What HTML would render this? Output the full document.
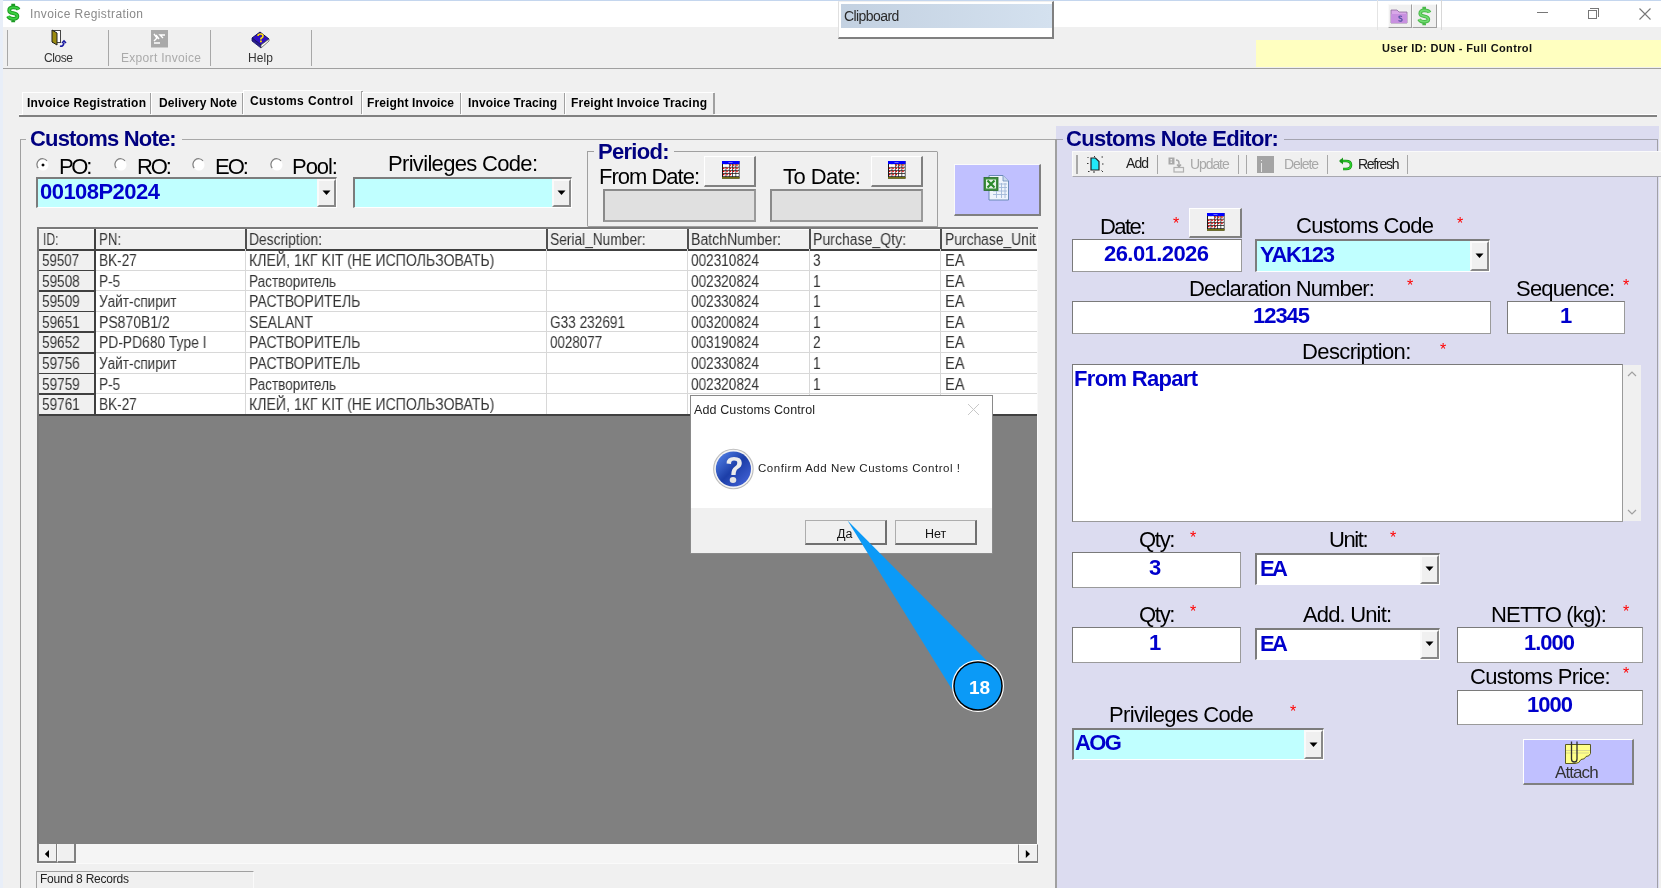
<!DOCTYPE html><html><head><meta charset="utf-8"><style>
html,body{margin:0;padding:0;}
body{width:1661px;height:888px;position:relative;overflow:hidden;font-family:"Liberation Sans",sans-serif;}
div{position:absolute;box-sizing:border-box;}
.t{white-space:nowrap;line-height:1;will-change:transform;}
</style></head><body>
<div style="left:0px;top:0px;width:1661px;height:888px;background:#f0f0f0"></div>
<div style="left:0px;top:0px;width:1661px;height:27px;background:#fff"></div>
<div style="left:0px;top:0px;width:1661px;height:1px;background:#c4d6ee"></div>
<div style="left:0px;top:0px;width:3px;height:888px;background:#e8eef8"></div>
<svg style="position:absolute;left:0;top:0" width="26" height="26" viewBox="0 0 26 26"><path d="M18.6 9.6 Q17.6 7.4 13.2 7.4 Q9.2 7.4 9.2 10.4 Q9.2 12.4 13.2 13.2 Q17.4 14 17.4 16.3 Q17.4 18.8 13.2 18.8 Q9.2 18.8 8 16.2 M13.2 3.8 V8 M13.2 18 V22.2" fill="none" stroke="#1a9a22" stroke-width="3.8"/><path d="M18.6 9.6 Q17.6 7.4 13.2 7.4 Q9.2 7.4 9.2 10.4 Q9.2 12.4 13.2 13.2 Q17.4 14 17.4 16.3 Q17.4 18.8 13.2 18.8 Q9.2 18.8 8 16.2" fill="none" stroke="#3ad040" stroke-width="1.8"/></svg>
<div class="t" style="left:30.00px;top:8.00px;font-size:12px;color:#8a8a8a;letter-spacing:0.402px;">Invoice Registration</div>
<div style="left:3px;top:27px;width:1658px;height:41px;background:#f0f0f0"></div>
<div style="left:7px;top:30px;width:1px;height:36px;background:#a8a8a8"></div>
<div style="left:108px;top:30px;width:1px;height:36px;background:#a8a8a8"></div>
<div style="left:210px;top:30px;width:1px;height:36px;background:#a8a8a8"></div>
<div style="left:311px;top:30px;width:1px;height:36px;background:#a8a8a8"></div>
<div style="left:3px;top:67.6px;width:1658px;height:1.8px;background:#a0a0a0"></div>
<svg style="position:absolute;left:50px;top:29px" width="18" height="20" viewBox="0 0 18 20"><rect x="2.5" y="1.5" width="8" height="12" fill="#fff" stroke="#444" stroke-width="1"/><path d="M2 1 L7 4 L7 16 L2 13 Z" fill="#9a8a10" stroke="#222" stroke-width="1"/><path d="M10 17 Q13 18 14 14 M12 14 L14 12 L16 14" fill="none" stroke="#1a1aa0" stroke-width="1.6"/></svg>
<svg style="position:absolute;left:151px;top:30px" width="18" height="18" viewBox="0 0 18 18"><rect x="0" y="0" width="17" height="17.5" fill="#a9a9a9"/><path d="M3 4 L6 8 L3 11 M5 5 L8 9 M14 5 L9 5 L12 8 M3 13 L9 13" fill="none" stroke="#fff" stroke-width="1.4"/></svg>
<svg style="position:absolute;left:251px;top:31px" width="19" height="18" viewBox="0 0 19 18"><path d="M1 7 L9 1 L18 8 L10 14 Z" fill="#3010c0" stroke="#101060" stroke-width="1"/><path d="M1 7 L1 10 L10 17 L10 14 Z" fill="#2a1a90" stroke="#101060" stroke-width="0.8"/><path d="M10 14 L18 8 L18 10 L10 17 Z" fill="#fff" stroke="#555" stroke-width="0.8"/><path d="M7 5 Q7 3 9.5 3 Q12 3 12 5 Q12 6.5 10.5 7 Q9.8 7.4 9.8 8.5" fill="none" stroke="#ffe000" stroke-width="1.6"/><rect x="9" y="9.5" width="1.8" height="1.8" fill="#ffe000"/></svg>
<div class="t" style="left:44.00px;top:52.00px;font-size:12px;color:#333;letter-spacing:-0.415px;">Close</div>
<div class="t" style="left:121.00px;top:52.00px;font-size:12px;color:#aaa;letter-spacing:0.306px;">Export Invoice</div>
<div class="t" style="left:248.00px;top:52.00px;font-size:12px;color:#333;letter-spacing:0.113px;">Help</div>
<div style="left:1256px;top:40px;width:405px;height:27px;background:#ffffc0"></div>
<div class="t" style="left:1382.00px;top:43.00px;font-size:11px;color:#111;font-weight:bold;letter-spacing:0.362px;">User ID: DUN - Full Control</div>
<div style="left:19px;top:115px;width:1638px;height:2px;background:#808080"></div>
<div style="left:19px;top:114px;width:1638px;height:1px;background:#fff"></div>
<div style="left:22px;top:92px;width:129px;height:23px;background:#f0f0f0;border-top:1px solid #fff;border-left:1px solid #fff;"></div>
<div style="left:150px;top:92.5px;width:1.5px;height:21px;background:#a0a0a0"></div>
<div class="t" style="left:27.00px;top:97.00px;font-size:12px;color:#000;font-weight:bold;letter-spacing:0.225px;">Invoice Registration</div>
<div style="left:151px;top:92px;width:92px;height:23px;background:#f0f0f0;border-top:1px solid #fff;border-left:1px solid #fff;"></div>
<div style="left:242px;top:92.5px;width:1.5px;height:21px;background:#a0a0a0"></div>
<div class="t" style="left:159.00px;top:97.00px;font-size:12px;color:#000;font-weight:bold;letter-spacing:0.110px;">Delivery Note</div>
<div style="left:243px;top:90px;width:119px;height:25px;background:#f0f0f0;border-top:1px solid #fff;border-left:1px solid #fff;"></div>
<div style="left:361px;top:90.5px;width:1.5px;height:23px;background:#a0a0a0"></div>
<div class="t" style="left:250.00px;top:95.00px;font-size:12px;color:#000;font-weight:bold;letter-spacing:0.406px;">Customs Control</div>
<div style="left:362px;top:92px;width:99px;height:23px;background:#f0f0f0;border-top:1px solid #fff;border-left:1px solid #fff;"></div>
<div style="left:460px;top:92.5px;width:1.5px;height:21px;background:#a0a0a0"></div>
<div class="t" style="left:367.00px;top:97.00px;font-size:12px;color:#000;font-weight:bold;letter-spacing:0.120px;">Freight Invoice</div>
<div style="left:461px;top:92px;width:104px;height:23px;background:#f0f0f0;border-top:1px solid #fff;border-left:1px solid #fff;"></div>
<div style="left:564px;top:92.5px;width:1.5px;height:21px;background:#a0a0a0"></div>
<div class="t" style="left:468.00px;top:97.00px;font-size:12px;color:#000;font-weight:bold;letter-spacing:0.117px;">Invoice Tracing</div>
<div style="left:565px;top:92px;width:149px;height:23px;background:#f0f0f0;border-top:1px solid #fff;border-left:1px solid #fff;"></div>
<div style="left:713px;top:92.5px;width:1.5px;height:21px;background:#a0a0a0"></div>
<div class="t" style="left:571.00px;top:97.00px;font-size:12px;color:#000;font-weight:bold;letter-spacing:0.212px;">Freight Invoice Tracing</div>
<div style="left:838px;top:1px;width:216px;height:38px;background:#fff;border-right:2px solid #808080;border-bottom:2.5px solid #808080;border-left:1px solid #e0e0e0;border-top:1px solid #f0f0f0;"></div>
<div style="left:841px;top:4px;width:211px;height:24px;background:linear-gradient(90deg,#c3d1e1,#d4e1ef)"></div>
<div class="t" style="left:844.00px;top:9.00px;font-size:14px;color:#2a2a2a;letter-spacing:-0.578px;">Clipboard</div>
<div style="left:1377px;top:0px;width:1px;height:30px;background:#e4e4e4"></div>
<div style="left:1441px;top:0px;width:1px;height:30px;background:#d8d8d8"></div>
<div style="left:1387.5px;top:4px;width:24px;height:24px;background:#f0f0f0;border-right:1.5px solid #a0a0a0;border-bottom:1.5px solid #a0a0a0;border-left:1px solid #fafafa;border-top:1px solid #fafafa;"></div>
<div style="left:1411.5px;top:4px;width:25px;height:24px;background:#f0f0f0;border-right:1.5px solid #a0a0a0;border-bottom:1.5px solid #a0a0a0;border-left:1px solid #fafafa;border-top:1px solid #fafafa;"></div>
<svg style="position:absolute;left:1390px;top:7px" width="20" height="18" viewBox="0 0 20 18"><path d="M1 3 L7 3 L9 5 L17 5 L17 16 L1 16 Z" fill="#d9a8e8" stroke="#8a6a9a" stroke-width="0.8"/><rect x="1" y="7" width="16" height="9" fill="#c890e0"/><path d="M12 9.5 Q10 8.5 9 9.5 Q8.5 11 11 11.5 Q13 12.5 11.5 14 Q10 14.5 8.5 13.5" fill="none" stroke="#5050a0" stroke-width="1.1"/></svg>
<svg style="position:absolute;left:1411px;top:3px" width="26" height="26" viewBox="0 0 26 26"><path d="M18.6 9.6 Q17.6 7.4 13.2 7.4 Q9.2 7.4 9.2 10.4 Q9.2 12.4 13.2 13.2 Q17.4 14 17.4 16.3 Q17.4 18.8 13.2 18.8 Q9.2 18.8 8 16.2 M13.2 3.8 V8 M13.2 18 V22.2" fill="none" stroke="#48b848" stroke-width="3.6"/><path d="M18.6 9.6 Q17.6 7.4 13.2 7.4 Q9.2 7.4 9.2 10.4 Q9.2 12.4 13.2 13.2 Q17.4 14 17.4 16.3 Q17.4 18.8 13.2 18.8 Q9.2 18.8 8 16.2" fill="none" stroke="#70dc70" stroke-width="1.6"/></svg>
<div style="left:1537px;top:12px;width:11px;height:1px;background:#777"></div>
<div style="left:1588px;top:10px;width:8.5px;height:8.5px;border:1px solid #777;background:#fff"></div>
<div style="left:1590px;top:8px;width:8.5px;height:8.5px;border-top:1px solid #777;border-right:1px solid #777;"></div>
<svg style="position:absolute;left:1639px;top:7.5px" width="12" height="12" viewBox="0 0 12 12"><path d="M0.5 0.5 L11.5 11.5 M11.5 0.5 L0.5 11.5" stroke="#777" stroke-width="1.1"/></svg>
<div style="left:20px;top:138.5px;width:1036px;height:760px;border-left:1.2px solid #a0a0a0;border-top:1px solid #a8a8a8;"></div>
<div style="left:26px;top:128px;width:156px;height:20px;background:#f0f0f0"></div>
<div class="t" style="left:30.00px;top:128.00px;font-size:22px;color:#000080;font-weight:bold;letter-spacing:-0.818px;">Customs Note:</div>
<svg style="position:absolute;left:36px;top:158px" width="14" height="14" viewBox="0 0 14 14"><circle cx="7" cy="7" r="5.5" fill="#fff"/><path d="M2.2 10 A5.5 5.5 0 0 1 11 2.8" fill="none" stroke="#808080" stroke-width="1.2"/><path d="M7 5.2 L8.8 7 L7 8.8 L5.2 7 Z" fill="#000"/></svg>
<div class="t" style="left:59.00px;top:156.00px;font-size:22px;color:#000;letter-spacing:-2.325px;">PO:</div>
<svg style="position:absolute;left:114px;top:158px" width="14" height="14" viewBox="0 0 14 14"><circle cx="7" cy="7" r="5.5" fill="#fff"/><path d="M2.2 10 A5.5 5.5 0 0 1 11 2.8" fill="none" stroke="#808080" stroke-width="1.2"/></svg>
<div class="t" style="left:137.00px;top:156.00px;font-size:22px;color:#000;letter-spacing:-2.080px;">RO:</div>
<svg style="position:absolute;left:192px;top:158px" width="14" height="14" viewBox="0 0 14 14"><circle cx="7" cy="7" r="5.5" fill="#fff"/><path d="M2.2 10 A5.5 5.5 0 0 1 11 2.8" fill="none" stroke="#808080" stroke-width="1.2"/></svg>
<div class="t" style="left:215.00px;top:156.00px;font-size:22px;color:#000;letter-spacing:-1.975px;">EO:</div>
<svg style="position:absolute;left:270px;top:158px" width="14" height="14" viewBox="0 0 14 14"><circle cx="7" cy="7" r="5.5" fill="#fff"/><path d="M2.2 10 A5.5 5.5 0 0 1 11 2.8" fill="none" stroke="#808080" stroke-width="1.2"/></svg>
<div class="t" style="left:292.00px;top:156.00px;font-size:22px;color:#000;letter-spacing:-1.040px;">Pool:</div>
<div style="left:36px;top:177px;width:301px;height:31px;background:#c0ffff;border-top:2px solid #7c7c7c;border-left:2px solid #7c7c7c;border-right:1px solid #fff;border-bottom:1px solid #fff;"></div>
<div style="left:317px;top:179px;width:19px;height:28px;background:#f0f0f0;border-left:2px solid #fafafa;border-top:2px solid #fafafa;border-right:2px solid #888;border-bottom:2px solid #888;"></div>
<svg style="position:absolute;left:321.5px;top:190.0px" width="9" height="6" viewBox="0 0 9 6"><path d="M0.5 0.5 L8.5 0.5 L4.5 5 Z" fill="#000"/></svg>
<div class="t" style="left:39.50px;top:181.00px;font-size:22px;color:#0000cc;font-weight:bold;letter-spacing:-0.539px;">00108P2024</div>
<div class="t" style="left:388.00px;top:153.00px;font-size:22px;color:#000;letter-spacing:-0.677px;">Privileges Code:</div>
<div style="left:353px;top:177px;width:219px;height:31px;background:#c0ffff;border-top:2px solid #7c7c7c;border-left:2px solid #7c7c7c;border-right:1px solid #fff;border-bottom:1px solid #fff;"></div>
<div style="left:552px;top:179px;width:19px;height:28px;background:#f0f0f0;border-left:2px solid #fafafa;border-top:2px solid #fafafa;border-right:2px solid #888;border-bottom:2px solid #888;"></div>
<svg style="position:absolute;left:556.5px;top:190.0px" width="9" height="6" viewBox="0 0 9 6"><path d="M0.5 0.5 L8.5 0.5 L4.5 5 Z" fill="#000"/></svg>
<div style="left:587px;top:151px;width:351px;height:76px;border-left:1px solid #a0a0a0;border-top:1px solid #a0a0a0;border-right:1px solid #fff;border-bottom:1px solid #fff;"></div>
<div style="left:588px;top:152px;width:350px;height:75px;border-right:1px solid #a0a0a0;border-bottom:1px solid #a0a0a0;"></div>
<div style="left:594px;top:140px;width:80px;height:16px;background:#f0f0f0"></div>
<div class="t" style="left:597.50px;top:141.00px;font-size:22px;color:#000080;font-weight:bold;letter-spacing:-0.715px;">Period:</div>
<div class="t" style="left:599.30px;top:166.00px;font-size:22px;color:#000;letter-spacing:-1.000px;">From Date:</div>
<div class="t" style="left:783.00px;top:166.00px;font-size:22px;color:#000;letter-spacing:-0.564px;">To Date:</div>
<div style="left:704px;top:156px;width:52px;height:31px;background:#f0f0f0;border-left:1px solid #fff;border-top:1px solid #fff;border-right:2px solid #808080;border-bottom:2px solid #808080;"></div>
<svg style="position:absolute;left:721.5px;top:160.8px" width="18" height="18" viewBox="0 0 18 18"><rect x="0" y="0" width="17.5" height="17.6" fill="#1a1a1a"/><rect x="0" y="0" width="17.5" height="3" fill="#0000ff"/><rect x="6.5" y="1.2" width="4" height="0.8" fill="#8080ff"/><rect x="0" y="16" width="17.5" height="1.6" fill="#707010"/><rect x="1.00" y="3.40" width="2.6" height="2.4" fill="#fff"/><rect x="4.30" y="3.40" width="2.6" height="2.4" fill="#fff"/><rect x="7.60" y="3.40" width="2.6" height="2.4" fill="#fff"/><rect x="7.60" y="3.40" width="1.5" height="1.4" fill="#e00000"/><rect x="10.90" y="3.40" width="2.6" height="2.4" fill="#fff"/><rect x="10.90" y="3.40" width="1.5" height="1.4" fill="#e00000"/><rect x="14.20" y="3.40" width="2.6" height="2.4" fill="#fff"/><rect x="14.20" y="3.40" width="1.5" height="1.4" fill="#e00000"/><rect x="1.00" y="6.55" width="2.6" height="2.4" fill="#fff"/><rect x="1.00" y="6.55" width="1.5" height="1.4" fill="#e00000"/><rect x="4.30" y="6.55" width="2.6" height="2.4" fill="#fff"/><rect x="4.30" y="6.55" width="1.5" height="1.4" fill="#e00000"/><rect x="7.60" y="6.55" width="2.6" height="2.4" fill="#fff"/><rect x="7.60" y="6.55" width="1.5" height="1.4" fill="#e00000"/><rect x="10.90" y="6.55" width="2.6" height="2.4" fill="#fff"/><rect x="10.90" y="6.55" width="1.5" height="1.4" fill="#e00000"/><rect x="14.20" y="6.55" width="2.6" height="2.4" fill="#fff"/><rect x="14.20" y="6.55" width="1.5" height="1.4" fill="#e00000"/><rect x="1.00" y="9.70" width="2.6" height="2.4" fill="#fff"/><rect x="1.00" y="9.70" width="1.5" height="1.4" fill="#e00000"/><rect x="4.30" y="9.70" width="2.6" height="2.4" fill="#fff"/><rect x="4.30" y="9.70" width="1.5" height="1.4" fill="#e00000"/><rect x="7.60" y="9.70" width="2.6" height="2.4" fill="#fff"/><rect x="7.60" y="9.70" width="1.5" height="1.4" fill="#e00000"/><rect x="10.90" y="9.70" width="2.6" height="2.4" fill="#fff"/><rect x="10.90" y="9.70" width="1.5" height="1.4" fill="#e00000"/><rect x="14.20" y="9.70" width="2.6" height="2.4" fill="#fff"/><rect x="14.20" y="9.70" width="1.5" height="1.4" fill="#e00000"/><rect x="1.00" y="12.85" width="2.6" height="2.4" fill="#fff"/><rect x="1.00" y="12.85" width="1.5" height="1.4" fill="#e00000"/><rect x="4.30" y="12.85" width="2.6" height="2.4" fill="#fff"/><rect x="4.30" y="12.85" width="1.5" height="1.4" fill="#e00000"/><rect x="7.60" y="12.85" width="2.6" height="2.4" fill="#fff"/><rect x="7.60" y="12.85" width="1.5" height="1.4" fill="#e00000"/><rect x="10.90" y="12.85" width="2.6" height="2.4" fill="#fff"/><rect x="14.20" y="12.85" width="2.6" height="2.4" fill="#fff"/><rect x="1" y="3.4" width="5.9" height="2.4" fill="#fff"/></svg>
<div style="left:871px;top:156px;width:52px;height:31px;background:#f0f0f0;border-left:1px solid #fff;border-top:1px solid #fff;border-right:2px solid #808080;border-bottom:2px solid #808080;"></div>
<svg style="position:absolute;left:887.7px;top:160.8px" width="18" height="18" viewBox="0 0 18 18"><rect x="0" y="0" width="17.5" height="17.6" fill="#1a1a1a"/><rect x="0" y="0" width="17.5" height="3" fill="#0000ff"/><rect x="6.5" y="1.2" width="4" height="0.8" fill="#8080ff"/><rect x="0" y="16" width="17.5" height="1.6" fill="#707010"/><rect x="1.00" y="3.40" width="2.6" height="2.4" fill="#fff"/><rect x="4.30" y="3.40" width="2.6" height="2.4" fill="#fff"/><rect x="7.60" y="3.40" width="2.6" height="2.4" fill="#fff"/><rect x="7.60" y="3.40" width="1.5" height="1.4" fill="#e00000"/><rect x="10.90" y="3.40" width="2.6" height="2.4" fill="#fff"/><rect x="10.90" y="3.40" width="1.5" height="1.4" fill="#e00000"/><rect x="14.20" y="3.40" width="2.6" height="2.4" fill="#fff"/><rect x="14.20" y="3.40" width="1.5" height="1.4" fill="#e00000"/><rect x="1.00" y="6.55" width="2.6" height="2.4" fill="#fff"/><rect x="1.00" y="6.55" width="1.5" height="1.4" fill="#e00000"/><rect x="4.30" y="6.55" width="2.6" height="2.4" fill="#fff"/><rect x="4.30" y="6.55" width="1.5" height="1.4" fill="#e00000"/><rect x="7.60" y="6.55" width="2.6" height="2.4" fill="#fff"/><rect x="7.60" y="6.55" width="1.5" height="1.4" fill="#e00000"/><rect x="10.90" y="6.55" width="2.6" height="2.4" fill="#fff"/><rect x="10.90" y="6.55" width="1.5" height="1.4" fill="#e00000"/><rect x="14.20" y="6.55" width="2.6" height="2.4" fill="#fff"/><rect x="14.20" y="6.55" width="1.5" height="1.4" fill="#e00000"/><rect x="1.00" y="9.70" width="2.6" height="2.4" fill="#fff"/><rect x="1.00" y="9.70" width="1.5" height="1.4" fill="#e00000"/><rect x="4.30" y="9.70" width="2.6" height="2.4" fill="#fff"/><rect x="4.30" y="9.70" width="1.5" height="1.4" fill="#e00000"/><rect x="7.60" y="9.70" width="2.6" height="2.4" fill="#fff"/><rect x="7.60" y="9.70" width="1.5" height="1.4" fill="#e00000"/><rect x="10.90" y="9.70" width="2.6" height="2.4" fill="#fff"/><rect x="10.90" y="9.70" width="1.5" height="1.4" fill="#e00000"/><rect x="14.20" y="9.70" width="2.6" height="2.4" fill="#fff"/><rect x="14.20" y="9.70" width="1.5" height="1.4" fill="#e00000"/><rect x="1.00" y="12.85" width="2.6" height="2.4" fill="#fff"/><rect x="1.00" y="12.85" width="1.5" height="1.4" fill="#e00000"/><rect x="4.30" y="12.85" width="2.6" height="2.4" fill="#fff"/><rect x="4.30" y="12.85" width="1.5" height="1.4" fill="#e00000"/><rect x="7.60" y="12.85" width="2.6" height="2.4" fill="#fff"/><rect x="7.60" y="12.85" width="1.5" height="1.4" fill="#e00000"/><rect x="10.90" y="12.85" width="2.6" height="2.4" fill="#fff"/><rect x="14.20" y="12.85" width="2.6" height="2.4" fill="#fff"/><rect x="1" y="3.4" width="5.9" height="2.4" fill="#fff"/></svg>
<div style="left:603px;top:189px;width:153px;height:33px;background:#e0e0e0;border:2px solid #8a8a8a;border-right-color:#9a9a9a;border-bottom-color:#9a9a9a;"></div>
<div style="left:770px;top:189px;width:153px;height:33px;background:#e0e0e0;border:2px solid #8a8a8a;border-right-color:#9a9a9a;border-bottom-color:#9a9a9a;"></div>
<div style="left:954px;top:164px;width:86.5px;height:52px;background:#c0c0ff;border-left:1.5px solid #fafafa;border-top:1.5px solid #fafafa;border-right:2px solid #808080;border-bottom:2px solid #808080;"></div>
<svg style="position:absolute;left:983px;top:174px" width="27" height="28" viewBox="0 0 27 28"><path d="M6 1.5 L20 1.5 L25.5 7 L25.5 26 L6 26 Z" fill="#eef4fc" stroke="#6a8ab8" stroke-width="1"/><path d="M20 1.5 L20 7 L25.5 7" fill="#c8d8ec" stroke="#6a8ab8" stroke-width="0.8"/><path d="M16 10 H24 M16 13.5 H24 M10 17 H24 M10 20.5 H24 M13.5 15 V24 M18.5 9 V24 M22 9 V24" stroke="#a0b8d8" stroke-width="0.9"/><rect x="1" y="3.5" width="14" height="13" fill="#3e8e3e" stroke="#2a6a2a" stroke-width="0.8"/><rect x="3" y="5.5" width="10" height="9" fill="#e8f4e8"/><path d="M4.5 6.5 L11.5 13.5 M11.5 6.5 L4.5 13.5" stroke="#2a8a2a" stroke-width="2.2"/></svg>
<div style="left:37px;top:227px;width:1001px;height:617px;background:#808080"></div>
<div style="left:37px;top:227px;width:1001px;height:2px;background:#7a7a7a"></div>
<div style="left:37px;top:227px;width:2px;height:616px;background:#7a7a7a"></div>
<div style="left:39px;top:229px;width:999px;height:20px;background:#f0f0f0;border-top:1px solid #fff;"></div>
<div style="left:39px;top:249px;width:56px;height:165px;background:#f0f0f0"></div>
<div style="left:95px;top:250px;width:943px;height:164px;background:#fff"></div>
<div style="left:39px;top:249px;width:999px;height:1.5px;background:#404040"></div>
<div style="left:39px;top:269.6px;width:55px;height:1.5px;background:#404040"></div>
<div style="left:95px;top:269.6px;width:943px;height:1px;background:#d8d8d8"></div>
<div style="left:39px;top:290.2px;width:55px;height:1.5px;background:#404040"></div>
<div style="left:95px;top:290.2px;width:943px;height:1px;background:#d8d8d8"></div>
<div style="left:39px;top:310.8px;width:55px;height:1.5px;background:#404040"></div>
<div style="left:95px;top:310.8px;width:943px;height:1px;background:#d8d8d8"></div>
<div style="left:39px;top:331.4px;width:55px;height:1.5px;background:#404040"></div>
<div style="left:95px;top:331.4px;width:943px;height:1px;background:#d8d8d8"></div>
<div style="left:39px;top:352.0px;width:55px;height:1.5px;background:#404040"></div>
<div style="left:95px;top:352.0px;width:943px;height:1px;background:#d8d8d8"></div>
<div style="left:39px;top:372.6px;width:55px;height:1.5px;background:#404040"></div>
<div style="left:95px;top:372.6px;width:943px;height:1px;background:#d8d8d8"></div>
<div style="left:39px;top:393.2px;width:55px;height:1.5px;background:#404040"></div>
<div style="left:95px;top:393.2px;width:943px;height:1px;background:#d8d8d8"></div>
<div style="left:39px;top:413.8px;width:55px;height:1.5px;background:#404040"></div>
<div style="left:95px;top:413.8px;width:943px;height:1px;background:#d8d8d8"></div>
<div style="left:94px;top:229px;width:1.5px;height:186px;background:#404040"></div>
<div style="left:245px;top:229px;width:1.5px;height:20px;background:#505050"></div>
<div style="left:245px;top:249px;width:1px;height:165px;background:#d8d8d8"></div>
<div style="left:546px;top:229px;width:1.5px;height:20px;background:#505050"></div>
<div style="left:546px;top:249px;width:1px;height:165px;background:#d8d8d8"></div>
<div style="left:687px;top:229px;width:1.5px;height:20px;background:#505050"></div>
<div style="left:687px;top:249px;width:1px;height:165px;background:#d8d8d8"></div>
<div style="left:809px;top:229px;width:1.5px;height:20px;background:#505050"></div>
<div style="left:809px;top:249px;width:1px;height:165px;background:#d8d8d8"></div>
<div style="left:940px;top:229px;width:1.5px;height:20px;background:#505050"></div>
<div style="left:940px;top:249px;width:1px;height:165px;background:#d8d8d8"></div>
<div style="left:1037px;top:229px;width:1.2px;height:615px;background:#f8f8f8"></div>
<div style="left:39px;top:414px;width:998px;height:1.5px;background:#404040"></div>
<div class="t" style="left:42.80px;top:232.00px;font-size:16px;color:#333;transform:scaleX(0.7568);transform-origin:0 0;">ID:</div>
<div class="t" style="left:99.00px;top:232.00px;font-size:16px;color:#333;transform:scaleX(0.8258);transform-origin:0 0;">PN:</div>
<div class="t" style="left:249.00px;top:232.00px;font-size:16px;color:#333;transform:scaleX(0.8641);transform-origin:0 0;">Description:</div>
<div class="t" style="left:549.50px;top:232.00px;font-size:16px;color:#333;transform:scaleX(0.8588);transform-origin:0 0;">Serial_Number:</div>
<div class="t" style="left:690.80px;top:232.00px;font-size:16px;color:#333;transform:scaleX(0.8803);transform-origin:0 0;">BatchNumber:</div>
<div class="t" style="left:813.40px;top:232.00px;font-size:16px;color:#333;transform:scaleX(0.8787);transform-origin:0 0;">Purchase_Qty:</div>
<div class="t" style="left:945.00px;top:232.00px;font-size:16px;color:#333;transform:scaleX(0.8651);transform-origin:0 0;">Purchase_Unit</div>
<div class="t" style="left:41.90px;top:253.00px;font-size:16px;color:#333;transform:scaleX(0.8341);transform-origin:0 0;">59507</div>
<div class="t" style="left:99.30px;top:253.00px;font-size:16px;color:#333;transform:scaleX(0.8484);transform-origin:0 0;">BK-27</div>
<div class="t" style="left:249.00px;top:253.00px;font-size:16px;color:#333;transform:scaleX(0.8824);transform-origin:0 0;">КЛЕЙ, 1КГ KIT (НЕ ИСПОЛЬЗОВАТЬ)</div>
<div class="t" style="left:690.80px;top:253.00px;font-size:16px;color:#333;transform:scaleX(0.8484);transform-origin:0 0;">002310824</div>
<div class="t" style="left:813.40px;top:253.00px;font-size:16px;color:#333;transform:scaleX(0.8484);transform-origin:0 0;">3</div>
<div class="t" style="left:945.00px;top:253.00px;font-size:16px;color:#333;transform:scaleX(0.9176);transform-origin:0 0;">EA</div>
<div class="t" style="left:41.90px;top:274.00px;font-size:16px;color:#333;transform:scaleX(0.8484);transform-origin:0 0;">59508</div>
<div class="t" style="left:99.30px;top:274.00px;font-size:16px;color:#333;transform:scaleX(0.8484);transform-origin:0 0;">P-5</div>
<div class="t" style="left:249.00px;top:274.00px;font-size:16px;color:#333;transform:scaleX(0.8484);transform-origin:0 0;">Растворитель</div>
<div class="t" style="left:690.80px;top:274.00px;font-size:16px;color:#333;transform:scaleX(0.8484);transform-origin:0 0;">002320824</div>
<div class="t" style="left:813.40px;top:274.00px;font-size:16px;color:#333;transform:scaleX(0.8484);transform-origin:0 0;">1</div>
<div class="t" style="left:945.00px;top:274.00px;font-size:16px;color:#333;transform:scaleX(0.9176);transform-origin:0 0;">EA</div>
<div class="t" style="left:41.90px;top:294.00px;font-size:16px;color:#333;transform:scaleX(0.8484);transform-origin:0 0;">59509</div>
<div class="t" style="left:99.30px;top:294.00px;font-size:16px;color:#333;transform:scaleX(0.8484);transform-origin:0 0;">Уайт-спирит</div>
<div class="t" style="left:249.00px;top:294.00px;font-size:16px;color:#333;transform:scaleX(0.8767);transform-origin:0 0;">РАСТВОРИТЕЛЬ</div>
<div class="t" style="left:690.80px;top:294.00px;font-size:16px;color:#333;transform:scaleX(0.8484);transform-origin:0 0;">002330824</div>
<div class="t" style="left:813.40px;top:294.00px;font-size:16px;color:#333;transform:scaleX(0.8484);transform-origin:0 0;">1</div>
<div class="t" style="left:945.00px;top:294.00px;font-size:16px;color:#333;transform:scaleX(0.9176);transform-origin:0 0;">EA</div>
<div class="t" style="left:41.90px;top:315.00px;font-size:16px;color:#333;transform:scaleX(0.8484);transform-origin:0 0;">59651</div>
<div class="t" style="left:99.30px;top:315.00px;font-size:16px;color:#333;transform:scaleX(0.8745);transform-origin:0 0;">PS870B1/2</div>
<div class="t" style="left:249.00px;top:315.00px;font-size:16px;color:#333;transform:scaleX(0.8754);transform-origin:0 0;">SEALANT</div>
<div class="t" style="left:549.50px;top:315.00px;font-size:16px;color:#333;transform:scaleX(0.8515);transform-origin:0 0;">G33 232691</div>
<div class="t" style="left:690.80px;top:315.00px;font-size:16px;color:#333;transform:scaleX(0.8484);transform-origin:0 0;">003200824</div>
<div class="t" style="left:813.40px;top:315.00px;font-size:16px;color:#333;transform:scaleX(0.8484);transform-origin:0 0;">1</div>
<div class="t" style="left:945.00px;top:315.00px;font-size:16px;color:#333;transform:scaleX(0.9176);transform-origin:0 0;">EA</div>
<div class="t" style="left:41.90px;top:335.00px;font-size:16px;color:#333;transform:scaleX(0.8484);transform-origin:0 0;">59652</div>
<div class="t" style="left:99.30px;top:335.00px;font-size:16px;color:#333;transform:scaleX(0.8653);transform-origin:0 0;">PD-PD680 Type I</div>
<div class="t" style="left:249.00px;top:335.00px;font-size:16px;color:#333;transform:scaleX(0.8767);transform-origin:0 0;">РАСТВОРИТЕЛЬ</div>
<div class="t" style="left:549.50px;top:335.00px;font-size:16px;color:#333;transform:scaleX(0.8360);transform-origin:0 0;">0028077</div>
<div class="t" style="left:690.80px;top:335.00px;font-size:16px;color:#333;transform:scaleX(0.8484);transform-origin:0 0;">003190824</div>
<div class="t" style="left:813.40px;top:335.00px;font-size:16px;color:#333;transform:scaleX(0.8484);transform-origin:0 0;">2</div>
<div class="t" style="left:945.00px;top:335.00px;font-size:16px;color:#333;transform:scaleX(0.9176);transform-origin:0 0;">EA</div>
<div class="t" style="left:41.90px;top:356.00px;font-size:16px;color:#333;transform:scaleX(0.8484);transform-origin:0 0;">59756</div>
<div class="t" style="left:99.30px;top:356.00px;font-size:16px;color:#333;transform:scaleX(0.8484);transform-origin:0 0;">Уайт-спирит</div>
<div class="t" style="left:249.00px;top:356.00px;font-size:16px;color:#333;transform:scaleX(0.8767);transform-origin:0 0;">РАСТВОРИТЕЛЬ</div>
<div class="t" style="left:690.80px;top:356.00px;font-size:16px;color:#333;transform:scaleX(0.8484);transform-origin:0 0;">002330824</div>
<div class="t" style="left:813.40px;top:356.00px;font-size:16px;color:#333;transform:scaleX(0.8484);transform-origin:0 0;">1</div>
<div class="t" style="left:945.00px;top:356.00px;font-size:16px;color:#333;transform:scaleX(0.9176);transform-origin:0 0;">EA</div>
<div class="t" style="left:41.90px;top:377.00px;font-size:16px;color:#333;transform:scaleX(0.8484);transform-origin:0 0;">59759</div>
<div class="t" style="left:99.30px;top:377.00px;font-size:16px;color:#333;transform:scaleX(0.8484);transform-origin:0 0;">P-5</div>
<div class="t" style="left:249.00px;top:377.00px;font-size:16px;color:#333;transform:scaleX(0.8484);transform-origin:0 0;">Растворитель</div>
<div class="t" style="left:690.80px;top:377.00px;font-size:16px;color:#333;transform:scaleX(0.8484);transform-origin:0 0;">002320824</div>
<div class="t" style="left:813.40px;top:377.00px;font-size:16px;color:#333;transform:scaleX(0.8484);transform-origin:0 0;">1</div>
<div class="t" style="left:945.00px;top:377.00px;font-size:16px;color:#333;transform:scaleX(0.9176);transform-origin:0 0;">EA</div>
<div class="t" style="left:41.90px;top:397.00px;font-size:16px;color:#333;transform:scaleX(0.8484);transform-origin:0 0;">59761</div>
<div class="t" style="left:99.30px;top:397.00px;font-size:16px;color:#333;transform:scaleX(0.8484);transform-origin:0 0;">BK-27</div>
<div class="t" style="left:249.00px;top:397.00px;font-size:16px;color:#333;transform:scaleX(0.8824);transform-origin:0 0;">КЛЕЙ, 1КГ KIT (НЕ ИСПОЛЬЗОВАТЬ)</div>
<div style="left:37px;top:844px;width:1001px;height:19px;background:#f5f5f5;"></div>
<div style="left:37px;top:844px;width:2px;height:19.5px;background:#7a7a7a"></div>
<div style="left:39px;top:844px;width:17.5px;height:18.5px;background:#f0f0f0;border-right:1.5px solid #808080;border-bottom:2px solid #808080;"></div>
<svg style="position:absolute;left:44px;top:849.5px" width="6" height="9" viewBox="0 0 6 9"><path d="M5 0 L5 8 L0.8 4 Z" fill="#000"/></svg>
<div style="left:56.5px;top:844px;width:19px;height:18.5px;background:#f0f0f0;border-right:2px solid #808080;border-bottom:2px solid #808080;border-left:1px solid #fafafa;"></div>
<div style="left:1018px;top:844px;width:19.5px;height:18.5px;background:#f0f0f0;border-left:1.5px solid #808080;border-right:1.5px solid #808080;border-bottom:2px solid #808080;border-top:1px solid #fff;"></div>
<svg style="position:absolute;left:1025px;top:849.5px" width="6" height="9" viewBox="0 0 6 9"><path d="M0.8 0 L0.8 8 L5 4 Z" fill="#000"/></svg>
<div style="left:36px;top:862.5px;width:1002px;height:1.5px;background:#fafafa"></div>
<div style="left:35.9px;top:870.7px;width:218px;height:18px;border-top:1px solid #a0a0a0;border-left:1px solid #a0a0a0;border-right:1px solid #fafafa;"></div>
<div class="t" style="left:39.50px;top:873.00px;font-size:12px;color:#222;letter-spacing:-0.217px;">Found 8 Records</div>
<div style="left:1055.5px;top:126px;width:603.5px;height:762px;background:#dcdcf0"></div>
<div style="left:1056.5px;top:138.5px;width:601.5px;height:750px;border-top:1px solid #a4a4b0;border-right:1.5px solid #a0a0a8;"></div>
<div style="left:1054.5px;top:138.5px;width:2px;height:750px;background:#a0a0a0"></div>
<div style="left:1062.5px;top:127px;width:221px;height:20px;background:#dcdcf0"></div>
<div class="t" style="left:1066.00px;top:128.00px;font-size:22px;color:#000080;font-weight:bold;letter-spacing:-0.693px;">Customs Note Editor:</div>
<div style="left:1071.5px;top:150.7px;width:589.5px;height:26px;background:#f0f0f0;border-top:1px solid #fafafa;border-left:1px solid #fafafa;border-bottom:1.5px solid #a8a8b0;"></div>
<div style="left:1076.4px;top:154.5px;width:1.2px;height:19.5px;background:#a8a8a8"></div>
<div style="left:1156.9px;top:154.5px;width:1.2px;height:19.5px;background:#a8a8a8"></div>
<div style="left:1237.5px;top:154.5px;width:1.2px;height:19.5px;background:#a8a8a8"></div>
<div style="left:1246.3px;top:154.5px;width:1.2px;height:19.5px;background:#a8a8a8"></div>
<div style="left:1327px;top:154.5px;width:1.2px;height:19.5px;background:#a8a8a8"></div>
<div style="left:1407.3px;top:154.5px;width:1.2px;height:19.5px;background:#a8a8a8"></div>
<svg style="position:absolute;left:1087px;top:156px" width="18" height="17" viewBox="0 0 18 17"><path d="M4 2 L8.5 2 L12 5.5 L12 14 L4 14 Z" fill="#20e8f8" stroke="#222" stroke-width="1.2"/><path d="M0.5 1.5 L1.5 1.5 M14.5 1 L16 1 M0 7.5 L1.5 7.5 M15 8 L16.5 8 M1 15.5 L2.5 15.5 M14.5 14.5 L16 16 M7.5 0 L7.5 1.2 M6 16 L8 16" stroke="#333" stroke-width="1"/></svg>
<div class="t" style="left:1126.10px;top:156.00px;font-size:14px;color:#222;letter-spacing:-0.910px;">Add</div>
<svg style="position:absolute;left:1168px;top:156.5px" width="17" height="16" viewBox="0 0 17 16"><rect x="0.5" y="0.5" width="6" height="7" fill="#a8a8a8"/><rect x="2.5" y="2" width="1.6" height="1.4" fill="#f0f0f0"/><rect x="2.5" y="4.5" width="1.6" height="1.4" fill="#f0f0f0"/><path d="M8 3 Q11 3 11 6 L11 9 M9 7.5 L11 10 L13 7.5" fill="none" stroke="#a8a8a8" stroke-width="1.4"/><rect x="6" y="10.5" width="9.5" height="4.5" fill="none" stroke="#b0b0b0" stroke-width="1.2"/></svg>
<div class="t" style="left:1190.00px;top:157.00px;font-size:14px;color:#a8a8a8;letter-spacing:-1.090px;">Update</div>
<div style="left:1256.8px;top:156px;width:17.2px;height:16.7px;background:#a4a4a4"></div>
<div style="left:1261px;top:163px;width:1.3px;height:9px;background:#e8e8e8"></div>
<div style="left:1261px;top:159.5px;width:1.3px;height:1.3px;background:#e8e8e8"></div>
<div class="t" style="left:1284.00px;top:157.00px;font-size:14px;color:#a8a8a8;letter-spacing:-1.092px;">Delete</div>
<svg style="position:absolute;left:1338px;top:157px" width="15" height="14" viewBox="0 0 15 14"><path d="M2 4 L8 4 Q13 4 13 8 Q13 12 8 12 L5 12" fill="none" stroke="#1a8a1a" stroke-width="2.6"/><path d="M2 4 L8 4 Q13 4 13 8 Q13 12 8 12 L5 12" fill="none" stroke="#30e030" stroke-width="1.2"/><path d="M1 4 L5 0.5 L5 7.5 Z" fill="#1a9a1a"/></svg>
<div class="t" style="left:1358.00px;top:157.00px;font-size:14px;color:#222;letter-spacing:-1.267px;">Refresh</div>
<div class="t" style="left:1099.90px;top:216.00px;font-size:22px;color:#000;letter-spacing:-1.595px;">Date:</div>
<div class="t" style="left:1173.43px;top:215.82px;font-size:16px;color:#f00;">*</div>
<div style="left:1189px;top:208px;width:53px;height:30px;background:#f0f0f0;border-left:1px solid #fff;border-top:1px solid #fff;border-right:2px solid #808080;border-bottom:2px solid #808080;"></div>
<svg style="position:absolute;left:1206.5px;top:212.8px" width="18" height="18" viewBox="0 0 18 18"><rect x="0" y="0" width="17.5" height="17.6" fill="#1a1a1a"/><rect x="0" y="0" width="17.5" height="3" fill="#0000ff"/><rect x="6.5" y="1.2" width="4" height="0.8" fill="#8080ff"/><rect x="0" y="16" width="17.5" height="1.6" fill="#707010"/><rect x="1.00" y="3.40" width="2.6" height="2.4" fill="#fff"/><rect x="4.30" y="3.40" width="2.6" height="2.4" fill="#fff"/><rect x="7.60" y="3.40" width="2.6" height="2.4" fill="#fff"/><rect x="7.60" y="3.40" width="1.5" height="1.4" fill="#e00000"/><rect x="10.90" y="3.40" width="2.6" height="2.4" fill="#fff"/><rect x="10.90" y="3.40" width="1.5" height="1.4" fill="#e00000"/><rect x="14.20" y="3.40" width="2.6" height="2.4" fill="#fff"/><rect x="14.20" y="3.40" width="1.5" height="1.4" fill="#e00000"/><rect x="1.00" y="6.55" width="2.6" height="2.4" fill="#fff"/><rect x="1.00" y="6.55" width="1.5" height="1.4" fill="#e00000"/><rect x="4.30" y="6.55" width="2.6" height="2.4" fill="#fff"/><rect x="4.30" y="6.55" width="1.5" height="1.4" fill="#e00000"/><rect x="7.60" y="6.55" width="2.6" height="2.4" fill="#fff"/><rect x="7.60" y="6.55" width="1.5" height="1.4" fill="#e00000"/><rect x="10.90" y="6.55" width="2.6" height="2.4" fill="#fff"/><rect x="10.90" y="6.55" width="1.5" height="1.4" fill="#e00000"/><rect x="14.20" y="6.55" width="2.6" height="2.4" fill="#fff"/><rect x="14.20" y="6.55" width="1.5" height="1.4" fill="#e00000"/><rect x="1.00" y="9.70" width="2.6" height="2.4" fill="#fff"/><rect x="1.00" y="9.70" width="1.5" height="1.4" fill="#e00000"/><rect x="4.30" y="9.70" width="2.6" height="2.4" fill="#fff"/><rect x="4.30" y="9.70" width="1.5" height="1.4" fill="#e00000"/><rect x="7.60" y="9.70" width="2.6" height="2.4" fill="#fff"/><rect x="7.60" y="9.70" width="1.5" height="1.4" fill="#e00000"/><rect x="10.90" y="9.70" width="2.6" height="2.4" fill="#fff"/><rect x="10.90" y="9.70" width="1.5" height="1.4" fill="#e00000"/><rect x="14.20" y="9.70" width="2.6" height="2.4" fill="#fff"/><rect x="14.20" y="9.70" width="1.5" height="1.4" fill="#e00000"/><rect x="1.00" y="12.85" width="2.6" height="2.4" fill="#fff"/><rect x="1.00" y="12.85" width="1.5" height="1.4" fill="#e00000"/><rect x="4.30" y="12.85" width="2.6" height="2.4" fill="#fff"/><rect x="4.30" y="12.85" width="1.5" height="1.4" fill="#e00000"/><rect x="7.60" y="12.85" width="2.6" height="2.4" fill="#fff"/><rect x="7.60" y="12.85" width="1.5" height="1.4" fill="#e00000"/><rect x="10.90" y="12.85" width="2.6" height="2.4" fill="#fff"/><rect x="14.20" y="12.85" width="2.6" height="2.4" fill="#fff"/><rect x="1" y="3.4" width="5.9" height="2.4" fill="#fff"/></svg>
<div style="left:1072px;top:239px;width:170px;height:33px;background:#fff;border:1px solid #7a7a7a;border-right-color:#9a9a9a;border-bottom-color:#9a9a9a;"></div>
<div class="t" style="left:1104.00px;top:243.00px;font-size:22px;color:#0000cc;font-weight:bold;letter-spacing:-0.568px;">26.01.2026</div>
<div class="t" style="left:1296.00px;top:215.00px;font-size:22px;color:#000;letter-spacing:-0.685px;">Customs Code</div>
<div class="t" style="left:1457.13px;top:216.42px;font-size:16px;color:#f00;">*</div>
<div style="left:1255px;top:239px;width:235px;height:33px;background:#c0ffff;border-top:2px solid #7c7c7c;border-left:2px solid #7c7c7c;border-right:1px solid #fff;border-bottom:1px solid #fff;"></div>
<div style="left:1470px;top:241px;width:19px;height:30px;background:#f0f0f0;border-left:2px solid #fafafa;border-top:2px solid #fafafa;border-right:2px solid #888;border-bottom:2px solid #888;"></div>
<svg style="position:absolute;left:1474.5px;top:253.0px" width="9" height="6" viewBox="0 0 9 6"><path d="M0.5 0.5 L8.5 0.5 L4.5 5 Z" fill="#000"/></svg>
<div class="t" style="left:1260.00px;top:244.00px;font-size:22px;color:#0000cc;font-weight:bold;letter-spacing:-1.236px;">YAK123</div>
<div class="t" style="left:1189.00px;top:278.00px;font-size:22px;color:#000;letter-spacing:-0.886px;">Declaration Number:</div>
<div class="t" style="left:1407.03px;top:278.42px;font-size:16px;color:#f00;">*</div>
<div style="left:1072px;top:301px;width:419px;height:33px;background:#fff;border:1px solid #7a7a7a;border-right-color:#9a9a9a;border-bottom-color:#9a9a9a;"></div>
<div class="t" style="left:1253.00px;top:305.00px;font-size:22px;color:#0000cc;font-weight:bold;letter-spacing:-1.040px;">12345</div>
<div class="t" style="left:1516.00px;top:278.00px;font-size:22px;color:#000;letter-spacing:-0.770px;">Sequence:</div>
<div class="t" style="left:1623.03px;top:278.42px;font-size:16px;color:#f00;">*</div>
<div style="left:1507px;top:301px;width:118px;height:33px;background:#fff;border:1px solid #7a7a7a;border-right-color:#9a9a9a;border-bottom-color:#9a9a9a;"></div>
<div class="t" style="left:1559.89px;top:305.00px;font-size:22px;color:#0000cc;font-weight:bold;">1</div>
<div class="t" style="left:1301.70px;top:341.00px;font-size:22px;color:#000;letter-spacing:-0.624px;">Description:</div>
<div class="t" style="left:1439.73px;top:341.62px;font-size:16px;color:#f00;">*</div>
<div style="left:1072px;top:364px;width:551px;height:158px;background:#fff;border:1px solid #7a7a7a;border-right-color:#9a9a9a;border-bottom-color:#9a9a9a;"></div>
<div style="left:1623px;top:365px;width:18px;height:156px;background:#f0f0f0"></div>
<svg style="position:absolute;left:1627px;top:370px" width="10" height="7" viewBox="0 0 10 7"><path d="M1 6 L5 2 L9 6" fill="none" stroke="#a0a0a0" stroke-width="1.2"/></svg>
<svg style="position:absolute;left:1627px;top:509px" width="10" height="7" viewBox="0 0 10 7"><path d="M1 1 L5 5 L9 1" fill="none" stroke="#a0a0a0" stroke-width="1.2"/></svg>
<div class="t" style="left:1074.00px;top:368.00px;font-size:22px;color:#0000cc;font-weight:bold;letter-spacing:-0.679px;">From Rapart</div>
<div class="t" style="left:1138.50px;top:529.00px;font-size:22px;color:#000;letter-spacing:-1.290px;">Qty:</div>
<div class="t" style="left:1189.93px;top:530.12px;font-size:16px;color:#f00;">*</div>
<div style="left:1072px;top:552px;width:169px;height:36px;background:#fff;border:1px solid #7a7a7a;border-right-color:#9a9a9a;border-bottom-color:#9a9a9a;"></div>
<div class="t" style="left:1149.39px;top:557.00px;font-size:22px;color:#0000cc;font-weight:bold;">3</div>
<div class="t" style="left:1328.50px;top:529.00px;font-size:22px;color:#000;letter-spacing:-1.428px;">Unit:</div>
<div class="t" style="left:1389.73px;top:530.12px;font-size:16px;color:#f00;">*</div>
<div style="left:1255px;top:552.5px;width:185px;height:32.0px;background:#fff;border-top:2px solid #7c7c7c;border-left:2px solid #7c7c7c;border-right:1px solid #fff;border-bottom:1px solid #fff;"></div>
<div style="left:1420px;top:554.5px;width:19px;height:29.0px;background:#f0f0f0;border-left:2px solid #fafafa;border-top:2px solid #fafafa;border-right:2px solid #888;border-bottom:2px solid #888;"></div>
<svg style="position:absolute;left:1424.5px;top:566.0px" width="9" height="6" viewBox="0 0 9 6"><path d="M0.5 0.5 L8.5 0.5 L4.5 5 Z" fill="#000"/></svg>
<div class="t" style="left:1260.00px;top:558.00px;font-size:22px;color:#0000cc;font-weight:bold;letter-spacing:-2.580px;">EA</div>
<div class="t" style="left:1138.50px;top:604.00px;font-size:22px;color:#000;letter-spacing:-1.290px;">Qty:</div>
<div class="t" style="left:1189.93px;top:604.22px;font-size:16px;color:#f00;">*</div>
<div style="left:1072px;top:627px;width:169px;height:36px;background:#fff;border:1px solid #7a7a7a;border-right-color:#9a9a9a;border-bottom-color:#9a9a9a;"></div>
<div class="t" style="left:1149.39px;top:632.00px;font-size:22px;color:#0000cc;font-weight:bold;">1</div>
<div class="t" style="left:1303.00px;top:604.00px;font-size:22px;color:#000;letter-spacing:-0.842px;">Add. Unit:</div>
<div style="left:1255px;top:627.5px;width:185px;height:32.0px;background:#fff;border-top:2px solid #7c7c7c;border-left:2px solid #7c7c7c;border-right:1px solid #fff;border-bottom:1px solid #fff;"></div>
<div style="left:1420px;top:629.5px;width:19px;height:29.0px;background:#f0f0f0;border-left:2px solid #fafafa;border-top:2px solid #fafafa;border-right:2px solid #888;border-bottom:2px solid #888;"></div>
<svg style="position:absolute;left:1424.5px;top:641.0px" width="9" height="6" viewBox="0 0 9 6"><path d="M0.5 0.5 L8.5 0.5 L4.5 5 Z" fill="#000"/></svg>
<div class="t" style="left:1260.00px;top:633.00px;font-size:22px;color:#0000cc;font-weight:bold;letter-spacing:-2.580px;">EA</div>
<div class="t" style="left:1491.00px;top:604.00px;font-size:22px;color:#000;letter-spacing:-0.830px;">NETTO (kg):</div>
<div class="t" style="left:1623.43px;top:604.22px;font-size:16px;color:#f00;">*</div>
<div style="left:1457px;top:627px;width:186px;height:36px;background:#fff;border:1px solid #7a7a7a;border-right-color:#9a9a9a;border-bottom-color:#9a9a9a;"></div>
<div class="t" style="left:1524.00px;top:632.00px;font-size:22px;color:#0000cc;font-weight:bold;letter-spacing:-1.027px;">1.000</div>
<div class="t" style="left:1470.00px;top:666.00px;font-size:22px;color:#000;letter-spacing:-0.651px;">Customs Price:</div>
<div class="t" style="left:1623.43px;top:665.72px;font-size:16px;color:#f00;">*</div>
<div style="left:1457px;top:690px;width:186px;height:35px;background:#fff;border:1px solid #7a7a7a;border-right-color:#9a9a9a;border-bottom-color:#9a9a9a;"></div>
<div class="t" style="left:1526.50px;top:694.00px;font-size:22px;color:#0000cc;font-weight:bold;letter-spacing:-0.983px;">1000</div>
<div class="t" style="left:1108.80px;top:704.00px;font-size:22px;color:#000;letter-spacing:-0.665px;">Privileges Code</div>
<div class="t" style="left:1289.73px;top:703.72px;font-size:16px;color:#f00;">*</div>
<div style="left:1072px;top:728px;width:252px;height:32px;background:#c0ffff;border-top:2px solid #7c7c7c;border-left:2px solid #7c7c7c;border-right:1px solid #fff;border-bottom:1px solid #fff;"></div>
<div style="left:1304px;top:730px;width:19px;height:29px;background:#f0f0f0;border-left:2px solid #fafafa;border-top:2px solid #fafafa;border-right:2px solid #888;border-bottom:2px solid #888;"></div>
<svg style="position:absolute;left:1308.5px;top:741.5px" width="9" height="6" viewBox="0 0 9 6"><path d="M0.5 0.5 L8.5 0.5 L4.5 5 Z" fill="#000"/></svg>
<div class="t" style="left:1075.00px;top:732.00px;font-size:22px;color:#0000cc;font-weight:bold;letter-spacing:-1.580px;">AOG</div>
<div style="left:1523px;top:739px;width:111px;height:46px;background:#c0c0ff;border-left:1px solid #fff;border-top:1px solid #fff;border-right:2px solid #808080;border-bottom:2px solid #808080;"></div>
<svg style="position:absolute;left:1565px;top:741px" width="27" height="25" viewBox="0 0 27 25"><path d="M0.5 3.5 H25.5 V12.5 Q24.5 15.5 21 15.5 Q20 18.5 16 18.5 Q14.5 22.5 10 22.5 H0.5 Z" fill="#ffff88" stroke="#5a5a20" stroke-width="1"/><path d="M1 9.5 H25 M1 12 H24" stroke="#d8d890" stroke-width="1"/><path d="M6.5 0.5 V18 Q6.5 21 9.3 21 Q12 21 12 18 V0.5" fill="none" stroke="#303030" stroke-width="1.3"/></svg>
<div class="t" style="left:1555.40px;top:764.00px;font-size:17px;color:#333;letter-spacing:-0.919px;">Attach</div>
<div style="left:689.5px;top:394.8px;width:303.3px;height:159.2px;background:#fff;border:1px solid #8a8a8a;"></div>
<div style="left:690.5px;top:508px;width:301.8px;height:45px;background:#f0f0f0"></div>
<div class="t" style="left:694.00px;top:404.00px;font-size:12.5px;color:#222;letter-spacing:0.122px;">Add Customs Control</div>
<svg style="position:absolute;left:967px;top:403px" width="13" height="13" viewBox="0 0 13 13"><path d="M1 1 L12 12 M12 1 L1 12" stroke="#c8c8c8" stroke-width="1"/></svg>
<svg style="position:absolute;left:712px;top:448px" width="42" height="42" viewBox="0 0 42 42"><defs><linearGradient id="qg" x1="0" y1="0" x2="1" y2="1"><stop offset="0" stop-color="#5a8af0"/><stop offset="0.5" stop-color="#1c3ea8"/><stop offset="1" stop-color="#4a6ae0"/></linearGradient></defs><circle cx="21.4" cy="21" r="20.3" fill="#bcbcbc"/><circle cx="21.4" cy="21" r="19.2" fill="#f4f4f4"/><circle cx="21.4" cy="21" r="17.6" fill="url(#qg)"/><path d="M14.6 15.5 Q14.6 8.9 22 8.9 Q29.8 8.9 29.8 15 Q29.8 18.8 25.8 21 Q23.8 22.3 23.6 27 L19.3 27 Q19.2 21 23 18.6 Q25.3 17.2 25.3 15 Q25.3 12.6 22 12.6 Q19 12.6 19 15.9 Z" fill="#ececec"/><ellipse cx="21" cy="31.9" rx="3.3" ry="3" fill="#e4e4e4"/></svg>
<div class="t" style="left:758.00px;top:463.00px;font-size:11.5px;color:#222;letter-spacing:0.541px;">Confirm Add New Customs Control !</div>
<div style="left:805px;top:520px;width:82px;height:25px;background:#f0f0f0;border-left:1px solid #fff;border-top:1px solid #fff;border-right:2px solid #808080;border-bottom:2px solid #808080;"></div>
<div style="left:805px;top:520px;width:82px;height:25px;border:1px solid #adadad;border-right:2px solid #707070;border-bottom:2px solid #707070;"></div>
<div style="left:895px;top:520px;width:82px;height:25px;background:#f0f0f0;border:1px solid #adadad;border-right:2px solid #707070;border-bottom:2px solid #707070;"></div>
<div class="t" style="left:837.28px;top:528.00px;font-size:12.5px;color:#111;">Да</div>
<div class="t" style="left:924.84px;top:528.00px;font-size:12.5px;color:#111;">Нет</div>
<svg style="position:absolute;left:0;top:0" width="1661" height="888" viewBox="0 0 1661 888"><path d="M847.5 520.5 L953 691 L987 661 Z" fill="#0b9af7"/><circle cx="978" cy="686" r="26" fill="#fff"/><circle cx="978" cy="686" r="24.8" fill="#000"/><circle cx="978" cy="686" r="23.3" fill="#0b9af7"/></svg>
<div class="t" style="left:968.60px;top:678.00px;font-size:19px;color:#fff;font-weight:bold;letter-spacing:-0.090px;">18</div>
</body></html>
